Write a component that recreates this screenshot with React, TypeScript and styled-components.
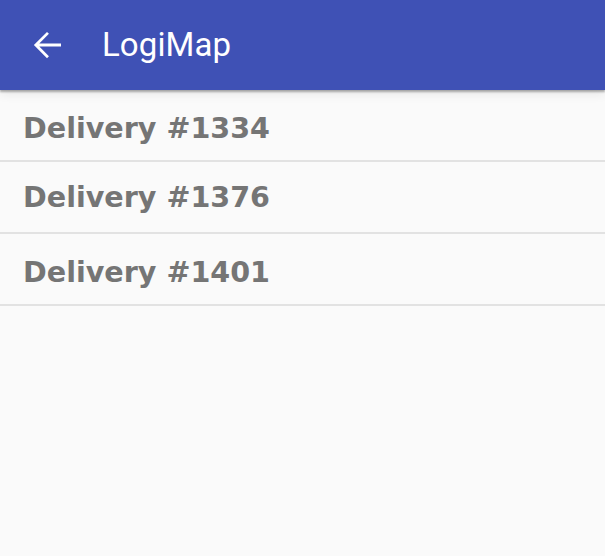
import styled, { createGlobalStyle } from 'styled-components';

const GlobalStyle = createGlobalStyle`
  html, body {
    margin: 0;
    padding: 0;
    background: #fafafa;
  }
`;

const Page = styled.div`
  display: flex;
  flex-direction: column;
  min-height: 100vh;
  background: #fafafa;
`;

const AppBar = styled.header`
  position: relative;
  z-index: 1;
  display: flex;
  align-items: center;
  height: 90px;
  padding: 0 0 0 26px;
  background: #3f51b5;
  box-shadow: 0 2px 2px rgba(0, 0, 0, 0.3), 0 4px 10px rgba(0, 0, 0, 0.08);
  color: #fff;
`;

const BackButton = styled.button`
  display: flex;
  align-items: center;
  justify-content: center;
  width: 42px;
  height: 42px;
  padding: 0;
  border: 0;
  background: transparent;
  color: #fff;
  cursor: pointer;
`;

const Title = styled.h1`
  margin: 0 0 2px 34px;
  font-family: Roboto, 'Liberation Sans', sans-serif;
  font-size: 33px;
  font-weight: 400;
  letter-spacing: 0.1px;
`;

const List = styled.ul`
  margin: 0;
  padding: 0;
  list-style: none;
`;

const Row = styled.li<{ $offset: number }>`
  display: flex;
  align-items: center;
  box-sizing: border-box;
  height: 72px;
  padding-left: 23px;
  padding-top: ${({ $offset }) => $offset}px;
  border-bottom: 2px solid #e2e2e2;
  font-family: 'DejaVu Sans', Verdana, sans-serif;
  font-size: 28.6px;
  font-weight: 700;
  color: #757575;
`;

const DELIVERIES = [
  { id: 1334, offset: 6 },
  { id: 1376, offset: 0 },
  { id: 1401, offset: 6 },
];

export default function App() {
  return (
    <Page>
      <GlobalStyle />
      <AppBar>
        <BackButton aria-label="Back">
          <svg width="42" height="42" viewBox="0 0 24 24" fill="currentColor">
            <path d="M20 11.1H7.6l5.5-5.5L12 4.5 4.5 12l7.5 7.5 1.1-1.1-5.5-5.5H20z" />
          </svg>
        </BackButton>
        <Title>LogiMap</Title>
      </AppBar>
      <List>
        {DELIVERIES.map((d) => (
          <Row key={d.id} $offset={d.offset}>
            Delivery #{d.id}
          </Row>
        ))}
      </List>
    </Page>
  );
}
